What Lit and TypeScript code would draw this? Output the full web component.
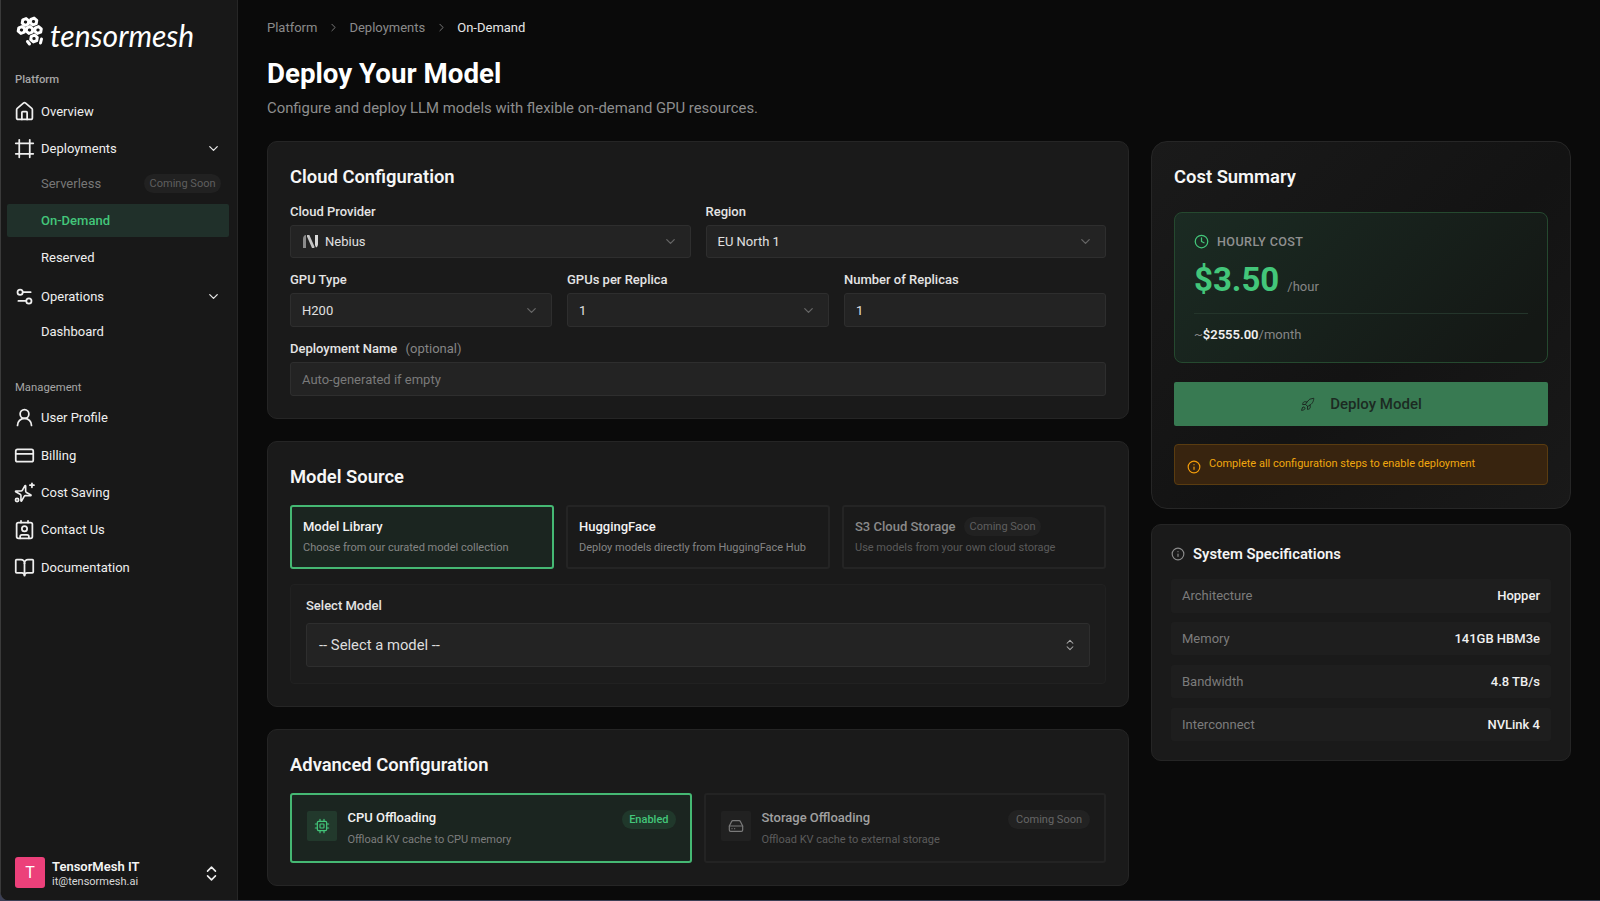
import { LitElement, html, css, svg } from "lit";
import { customElement } from "lit/decorators.js";

const ic = (body: unknown, cls = "ic") => html`<svg class=${cls} viewBox="0 0 24 24" fill="none" stroke="currentColor" stroke-width="2" stroke-linecap="round" stroke-linejoin="round">${body}</svg>`;

const I = {
  home: svg`<path d="M15 21v-8a1 1 0 0 0-1-1h-4a1 1 0 0 0-1 1v8"/><path d="M3 10a2 2 0 0 1 .709-1.528l7-6a2 2 0 0 1 2.582 0l7 6A2 2 0 0 1 21 10v9a2 2 0 0 1-2 2H5a2 2 0 0 1-2-2z"/>`,
  frame: svg`<line x1="22" x2="2" y1="6" y2="6"/><line x1="22" x2="2" y1="18" y2="18"/><line x1="6" x2="6" y1="2" y2="22"/><line x1="18" x2="18" y1="2" y2="22"/>`,
  ops: svg`<path d="M14 17H5"/><path d="M19 7h-9"/><circle cx="17" cy="17" r="3"/><circle cx="7" cy="7" r="3"/>`,
  user: svg`<circle cx="12" cy="8" r="5"/><path d="M20 21a8 8 0 0 0-16 0"/>`,
  card: svg`<rect width="20" height="14" x="2" y="5" rx="2"/><line x1="2" x2="22" y1="10" y2="10"/>`,
  spark: svg`<path transform="rotate(15 11 13) translate(-0.4 2) scale(.92)" d="M9.937 15.5A2 2 0 0 0 8.5 14.063l-6.135-1.582a.5.5 0 0 1 0-.962L8.5 9.936A2 2 0 0 0 9.937 8.5l1.582-6.135a.5.5 0 0 1 .963 0L14.063 8.5A2 2 0 0 0 15.5 9.937l6.135 1.581a.5.5 0 0 1 0 .964L15.5 14.063a2 2 0 0 0-1.437 1.437l-1.582 6.135a.5.5 0 0 1-.963 0z"/><path d="M20.5 1.5v4.5"/><path d="M18.2 3.7h4.6"/><circle cx="3.5" cy="20.5" r="1.8"/>`,
  contact: svg`<path d="M16 2v2"/><path d="M7 22v-2a2 2 0 0 1 2-2h6a2 2 0 0 1 2 2v2"/><path d="M8 2v2"/><circle cx="12" cy="11" r="3"/><rect x="3" y="4" width="18" height="18" rx="2"/>`,
  book: svg`<path d="M12 7v14"/><path d="M3 18a1 1 0 0 1-1-1V4a1 1 0 0 1 1-1h5a4 4 0 0 1 4 4 4 4 0 0 1 4-4h5a1 1 0 0 1 1 1v13a1 1 0 0 1-1 1h-6a3 3 0 0 0-3 3 3 3 0 0 0-3-3z"/>`,
  down: svg`<path d="m6 9 6 6 6-6"/>`,
  right: svg`<path d="m9 18 6-6-6-6"/>`,
  updown: svg`<path d="m7 15 5 5 5-5"/><path d="m7 9 5-5 5 5"/>`,
  clock: svg`<circle cx="12" cy="12" r="10"/><path d="M12 6v6l4 2"/>`,
  info: svg`<circle cx="12" cy="12" r="10"/><path d="M12 16v-4"/><path d="M12 8h.01"/>`,
  rocket: svg`<path d="M4.5 16.5c-1.5 1.26-2 5-2 5s3.74-.5 5-2c.71-.84.7-2.13-.09-2.91a2.18 2.18 0 0 0-2.91-.09z"/><path d="m12 15-3-3a22 22 0 0 1 2-3.95A12.88 12.88 0 0 1 22 2c0 2.72-.78 7.5-6 11a22.35 22.35 0 0 1-4 2z"/><path d="M9 12H4s.55-3.03 2-4c1.62-1.08 5 0 5 0"/><path d="M12 15v5s3.03-.55 4-2c1.08-1.62 0-5 0-5"/>`,
  cpu: svg`<rect x="5" y="5" width="14" height="14" rx="2"/><rect x="9" y="9" width="6" height="6" rx="1"/><path d="M9 2v3M15 2v3M9 19v3M15 19v3M2 9h3M2 15h3M19 9h3M19 15h3"/>`,
  drive: svg`<line x1="22" x2="2" y1="12" y2="12"/><path d="M5.45 5.11 2 12v6a2 2 0 0 0 2 2h16a2 2 0 0 0 2-2v-6l-3.45-6.89A2 2 0 0 0 16.76 4H7.24a2 2 0 0 0-1.79 1.11z"/><line x1="6" x2="6.01" y1="16" y2="16"/><line x1="10" x2="10.01" y1="16" y2="16"/>`,
};

@customElement("app-root")
export class AppRoot extends LitElement {
  static styles = css`
    :host { display: block; height: 901px; background: #3b3f55; font-family: Roboto, "Liberation Sans", sans-serif; color: #f2f2f2; overflow: hidden; }
    * { box-sizing: border-box; }
    .shell { display: flex; height: 900px; background: #0a0a0a; border-left: 1px solid #3a3a3a; border-bottom-left-radius: 8px; overflow: hidden; }
    .ic { width: 21px; height: 21px; flex: none; }

    .side { width: 237px; flex: none; background: #181818; border-right: 1px solid #262626; display: flex; flex-direction: column; padding: 0 8px 0 6px; }
    .logo { height: 71px; display: flex; align-items: flex-start; padding: 15px 0 0 7px; gap: 4px; }
    .logo svg { width: 32px; height: 32px; flex: none; }
    .logo span { font-family: Lato, sans-serif; font-style: italic; font-weight: 400; font-size: 30px; line-height: 30px; margin-top: 5px; color: #fff; letter-spacing: 0; }
    .gl { height: 18px; line-height: 18px; font-size: 11.3px; font-weight: 500; color: #a6a6a6; padding-left: 8px; }
    .gl.mg { margin-top: 31.2px; font-weight: 400; }
    .items { display: flex; flex-direction: column; gap: 4px; margin-top: 5.5px; }
    .items.m { gap: 4.1px; margin-top: 4.5px; }
    .grp { display: flex; flex-direction: column; gap: 1.8px; }
    .grp + .grp { margin-top: 1.6px; gap: 1.5px; }
    .subs { display: flex; flex-direction: column; gap: 4px; }
    .it { height: 33.2px; display: flex; align-items: center; gap: 6.5px; padding: 0 8px 0 6.5px; font-size: 13px; color: #efefef; border-radius: 2px; }
    .it .grow { flex: 1; }
    .chev { width: 15px; height: 15px; flex: none; color: #e8e8e8; }
    .sub { padding-left: 34px; }
    .sub.dim { color: #777; padding-right: 8px; justify-content: space-between; }
    .sub.on { background: #20302a; color: #43c67a; font-weight: 500; }
    .pill { background: #212121; color: #5f5f5f; font-size: 11px; height: 19px; line-height: 19px; border-radius: 10px; padding: 0 5.5px; }
    .foot { margin-top: auto; display: flex; align-items: center; padding: 0 0 11px 8px; }
    .av { width: 30px; height: 31px; background: #ec407a; color: #fff; border-radius: 3px; font-size: 16px; display: flex; align-items: center; justify-content: center; margin-right: 7px; }
    .who { flex: 1; display: flex; flex-direction: column; padding-top: 3px; }
    .who b { font-size: 13px; font-weight: 600; line-height: 15px; color: #f4f4f4; }
    .who span { font-size: 11px; line-height: 15px; margin-top: 0.5px; color: #d8d8d8; }
    .ud { width: 19px; height: 19px; margin: 2px 8px 0 0; color: #eee; }

    .main { flex: 1; min-width: 0; padding: 17px 29px 0 29px; }
    .crumb { height: 20px; display: flex; align-items: center; font-size: 13px; color: #8a8a8a; }
    .crumb svg { width: 13px; height: 13px; margin: 0 9.5px; color: #888; stroke-width: 1.6; }
    .crumb .cur { color: #e6e6e6; }
    h1 { margin: 18px 0 0; font-size: 27.7px; line-height: 38px; font-weight: 700; color: #fff; }
    .lead { margin: 3.5px 0 0; font-size: 14.85px; line-height: 22px; color: #8e8e8e; }
    .grid { display: grid; grid-template-columns: minmax(0, 1fr) 420px; gap: 22px; margin-top: 22px; align-items: start; }
    .col { display: flex; flex-direction: column; gap: 22px; }
    .col.r { gap: 15px; }
    .cardx { background: #1a1a1a; border: 1px solid #252525; border-radius: 10px; padding: 22px; }
    h2 { margin: 1px 0 0; font-size: 18.4px; line-height: 24px; font-weight: 600; color: #f6f6f6; }
    .row { display: grid; gap: 15px; margin-top: 12.3px; }
    .row.first { margin-top: 13px; }
    .c2 { grid-template-columns: 1fr 1fr; }
    .c3 { grid-template-columns: 1fr 1fr 1fr; }
    .lab { display: block; font-size: 13px; line-height: 20px; font-weight: 500; color: #e4e4e4; margin-bottom: 3px; }
    .lab i { font-style: normal; font-weight: 400; color: #858585; margin-left: 5px; }
    .ctl { height: 33.7px; background: #232323; border: 1px solid #2e2e2e; border-radius: 3px; display: flex; align-items: center; padding: 0 11px; font-size: 13px; color: #e0e0e0; }
    .ctl .t { flex: 1; }
    .ctl .ph { color: #7a7a7a; }
    .ctl .dn { width: 15px; height: 15px; color: #666; margin-right: 1px; }
    .neb { width: 17px; height: 15px; margin-right: 6px; }
    .srcs { display: grid; grid-template-columns: repeat(3, 1fr); gap: 12px; margin-top: 16px; }
    .src { height: 64px; border: 2px solid #242424; border-radius: 3px; padding: 0 11px; display: flex; flex-direction: column; justify-content: center; gap: 4.5px; }
    .src.on { border-color: #45b873; background: #1b2520; }
    .src .t1 { display: flex; align-items: center; gap: 8px; font-size: 13px; line-height: 17px; font-weight: 500; color: #f2f2f2; }
    .src .t2 { font-size: 11px; line-height: 17px; color: #858585; }
    .src.off .t1 { color: #8a8a8a; }
    .src.off .t2 { color: #5a5a5a; }
    .src .pill { font-weight: 400; font-size: 11px; padding: 0 6px; height: 19px; margin: -1px 0; }
    .panel { margin-top: 15px; background: #1c1c1c; border: 1px solid #212121; border-radius: 4px; padding: 11px 15px 16px; }
    .panel .lab { margin-bottom: 7px; }
    .big { height: 44px; font-size: 14.8px; padding: 0 12px; color: #dedede; }
    .big .dn { width: 14px; height: 14px; color: #aaa; margin-right: 0; stroke-width: 1.8; }
    .opts { display: grid; grid-template-columns: 1fr 1fr; gap: 12px; margin-top: 16px; }
    .opt { height: 70px; border: 2px solid #232323; border-radius: 3px; padding: 16px 14px 0 14.5px; display: flex; gap: 11px; }
    .opt.on { border-color: #45b873; background: #1b2520; }
    .box { width: 30px; height: 30px; background: #212121; border-radius: 2px; display: flex; align-items: center; justify-content: center; color: #7a7a7a; flex: none; }
    .on .box { background: #22392c; color: #43c67a; }
    .box svg { width: 16px; height: 16px; stroke-width: 1.8; }
    .otxt { flex: 1; min-width: 0; margin-top: -1.5px; }
    .otxt b { display: block; font-size: 13px; line-height: 17px; font-weight: 500; color: #f2f2f2; margin-top: -1px; }
    .otxt span { display: block; font-size: 11px; line-height: 17px; color: #7e7e7e; margin-top: 5px; }
    .opt.off b { color: #a0a0a0; }
    .opt.off span { color: #5c5c5c; }
    .tag { height: 19px; line-height: 19px; font-size: 11px; border-radius: 10px; padding: 0 7.5px; margin-top: -1px; font-weight: 500; background: #20382b; color: #43c67a; }
    .opt.off .tag { background: #222; color: #666; font-weight: 400; padding: 0 8px; }

    .cost { background: linear-gradient(135deg, #1a1a1a, #131313 55%, #191919); border-radius: 16px; border: 1px solid #262626; padding-bottom: 23px; }
    .cost h2 { margin-top: 1px; }
    .hour { margin-top: 23px; height: 151.5px; border: 1px solid #25492f; border-radius: 8px; background: linear-gradient(135deg, #1b2b23, #141815 90%); padding: 19.5px 19px 0; }
    .hl { display: flex; align-items: center; height: 18px; gap: 8px; font-size: 12.6px; font-weight: 500; letter-spacing: 0.4px; color: #909090; }
    .hl svg { width: 15px; height: 15px; color: #43c67a; }
    .amt { display: flex; align-items: baseline; gap: 8px; margin-top: 8px; height: 44px; }
    .amt b { font-size: 33px; line-height: 44px; font-weight: 700; color: #43c67a; }
    .amt span { font-size: 13px; color: #868686; }
    .hr { height: 1px; background: #24352b; margin-top: 11px; }
    .mo { font-size: 13px; line-height: 18px; margin-top: 11.5px; color: #868686; }
    .mo b { color: #f0f0f0; font-weight: 600; }
    .btn { margin-top: 18.8px; height: 44.5px; background: #387a52; border-radius: 2px; display: flex; align-items: center; justify-content: center; gap: 15px; font-size: 15px; font-weight: 500; color: #1c2a22; }
    .btn svg { width: 15px; height: 15px; stroke-width: 1.6; }
    .warn { margin-top: 18px; height: 41px; background: #38240f; border: 1px solid #5a3c10; border-radius: 4px; display: flex; align-items: flex-start; gap: 8px; padding: 10px 12px 0; font-size: 11px; line-height: 18px; color: #f0a70e; }
    .warn svg { width: 14px; height: 14px; margin-top: 5px; color: #f59e0b; }
    .specs { padding: 19px 19px 19px; background: #1a1a1a; }
    .sh { display: flex; align-items: center; gap: 8px; height: 24px; font-size: 14.8px; font-weight: 600; color: #f4f4f4; margin-top: -2px; }
    .sh svg { width: 14px; height: 14px; color: #8a8a8a; stroke-width: 2; }
    .sl { display: flex; flex-direction: column; gap: 9.6px; margin-top: 13px; }
    .sr { height: 33.3px; background: #1e1e1e; border-radius: 3px; display: flex; align-items: center; justify-content: space-between; padding: 0 11px; font-size: 13px; color: #7c7c7c; }
    .sr b { font-weight: 500; color: #f0f0f0; }
  `;

  private item(icon: unknown, label: string, chev = false) {
    return html`<div class="it">${ic(icon)}<span class="grow">${label}</span>${chev ? ic(I.down, "chev") : ""}</div>`;
  }

  private logo() {
    const hex = (x: number, y: number) => {
      const r = 3.5;
      const pts = [30, 90, 150, 210, 270, 330].map((a) => {
        const t = ((a + 10) * Math.PI) / 180;
        return `${(x + r * Math.cos(t)).toFixed(1)},${(y + r * Math.sin(t)).toFixed(1)}`;
      });
      return svg`<polygon points=${pts.join(" ")}/>`;
    };
    return html`<svg viewBox="0 0 31 32" fill="none" stroke="#fff" stroke-width="3" stroke-linejoin="round" stroke-linecap="round">
      ${hex(11, 7)}${hex(19, 6.5)}${hex(7, 15)}${hex(15, 15)}${hex(23.5, 15)}${hex(19.5, 23.5)}
      <path d="M13 26.5l2 2.5M27 24l-1 4"/>
    </svg>`;
  }

  render() {
    return html`<div class="shell">
      <aside class="side">
        <div class="logo">${this.logo()}<span>tensormesh</span></div>
        <div class="gl">Platform</div>
        <div class="items">
          ${this.item(I.home, "Overview")}
          <div class="grp">
            ${this.item(I.frame, "Deployments", true)}
            <div class="subs">
              <div class="it sub dim"><span>Serverless</span><span class="pill">Coming Soon</span></div>
              <div class="it sub on">On-Demand</div>
              <div class="it sub">Reserved</div>
            </div>
          </div>
          <div class="grp">
            ${this.item(I.ops, "Operations", true)}
            <div class="subs"><div class="it sub">Dashboard</div></div>
          </div>
        </div>
        <div class="gl mg">Management</div>
        <div class="items m">
          ${this.item(I.user, "User Profile")}
          ${this.item(I.card, "Billing")}
          ${this.item(I.spark, "Cost Saving")}
          ${this.item(I.contact, "Contact Us")}
          ${this.item(I.book, "Documentation")}
        </div>
        <div class="foot">
          <div class="av">T</div>
          <div class="who"><b>TensorMesh IT</b><span>it@tensormesh.ai</span></div>
          ${ic(I.updown, "ud")}
        </div>
      </aside>
      <main class="main">
        <div class="crumb"><span>Platform</span>${ic(I.right, "")}<span>Deployments</span>${ic(I.right, "")}<span class="cur">On-Demand</span></div>
        <h1>Deploy Your Model</h1>
        <p class="lead">Configure and deploy LLM models with flexible on-demand GPU resources.</p>
        <div class="grid">
          <div class="col">
            <section class="cardx">
              <h2>Cloud Configuration</h2>
              <div class="row c2 first">
                <div><label class="lab">Cloud Provider</label><div class="ctl">
                  <svg class="neb" viewBox="0 0 17 15"><path d="M1 14V5c0-2 1-4 3-4v13z" fill="#8a8a8a"/><path d="M5 1h2.4l5 11.5V14H10L5 2.5z" fill="#c4c4c4"/><path d="M13 1h3v9c0 1.5-.6 3-2 3.6L13 11z" fill="#d8d8d8"/></svg>
                  <span class="t">Nebius</span>${ic(I.down, "dn")}</div></div>
                <div><label class="lab">Region</label><div class="ctl"><span class="t">EU North 1</span>${ic(I.down, "dn")}</div></div>
              </div>
              <div class="row c3">
                <div><label class="lab">GPU Type</label><div class="ctl"><span class="t">H200</span>${ic(I.down, "dn")}</div></div>
                <div><label class="lab">GPUs per Replica</label><div class="ctl"><span class="t">1</span>${ic(I.down, "dn")}</div></div>
                <div><label class="lab">Number of Replicas</label><div class="ctl"><span class="t">1</span></div></div>
              </div>
              <div class="row">
                <div><label class="lab">Deployment Name <i>(optional)</i></label><div class="ctl"><span class="t ph">Auto-generated if empty</span></div></div>
              </div>
            </section>
            <section class="cardx">
              <h2>Model Source</h2>
              <div class="srcs">
                <div class="src on"><div class="t1">Model Library</div><div class="t2">Choose from our curated model collection</div></div>
                <div class="src"><div class="t1">HuggingFace</div><div class="t2">Deploy models directly from HuggingFace Hub</div></div>
                <div class="src off"><div class="t1">S3 Cloud Storage <span class="pill">Coming Soon</span></div><div class="t2">Use models from your own cloud storage</div></div>
              </div>
              <div class="panel">
                <label class="lab">Select Model</label>
                <div class="ctl big"><span class="t">-- Select a model --</span>${ic(I.updown, "dn")}</div>
              </div>
            </section>
            <section class="cardx">
              <h2>Advanced Configuration</h2>
              <div class="opts">
                <div class="opt on">
                  <div class="box">${ic(I.cpu, "")}</div>
                  <div class="otxt"><b>CPU Offloading</b><span>Offload KV cache to CPU memory</span></div>
                  <div class="tag">Enabled</div>
                </div>
                <div class="opt off">
                  <div class="box">${ic(I.drive, "")}</div>
                  <div class="otxt"><b>Storage Offloading</b><span>Offload KV cache to external storage</span></div>
                  <div class="tag">Coming Soon</div>
                </div>
              </div>
            </section>
          </div>
          <div class="col r">
            <section class="cardx cost">
              <h2>Cost Summary</h2>
              <div class="hour">
                <div class="hl">${ic(I.clock, "")}HOURLY COST</div>
                <div class="amt"><b>$3.50</b><span>/hour</span></div>
                <div class="hr"></div>
                <div class="mo">~<b>$2555.00</b>/month</div>
              </div>
              <div class="btn">${ic(I.rocket, "")}<span>Deploy Model</span></div>
              <div class="warn">${ic(I.info, "")}<span>Complete all configuration steps to enable deployment</span></div>
            </section>
            <section class="cardx specs">
              <div class="sh">${ic(I.info, "")}System Specifications</div>
              <div class="sl">
                <div class="sr">Architecture<b>Hopper</b></div>
                <div class="sr">Memory<b>141GB HBM3e</b></div>
                <div class="sr">Bandwidth<b>4.8 TB/s</b></div>
                <div class="sr">Interconnect<b>NVLink 4</b></div>
              </div>
            </section>
          </div>
        </div>
      </main>
    </div>`;
  }
}
